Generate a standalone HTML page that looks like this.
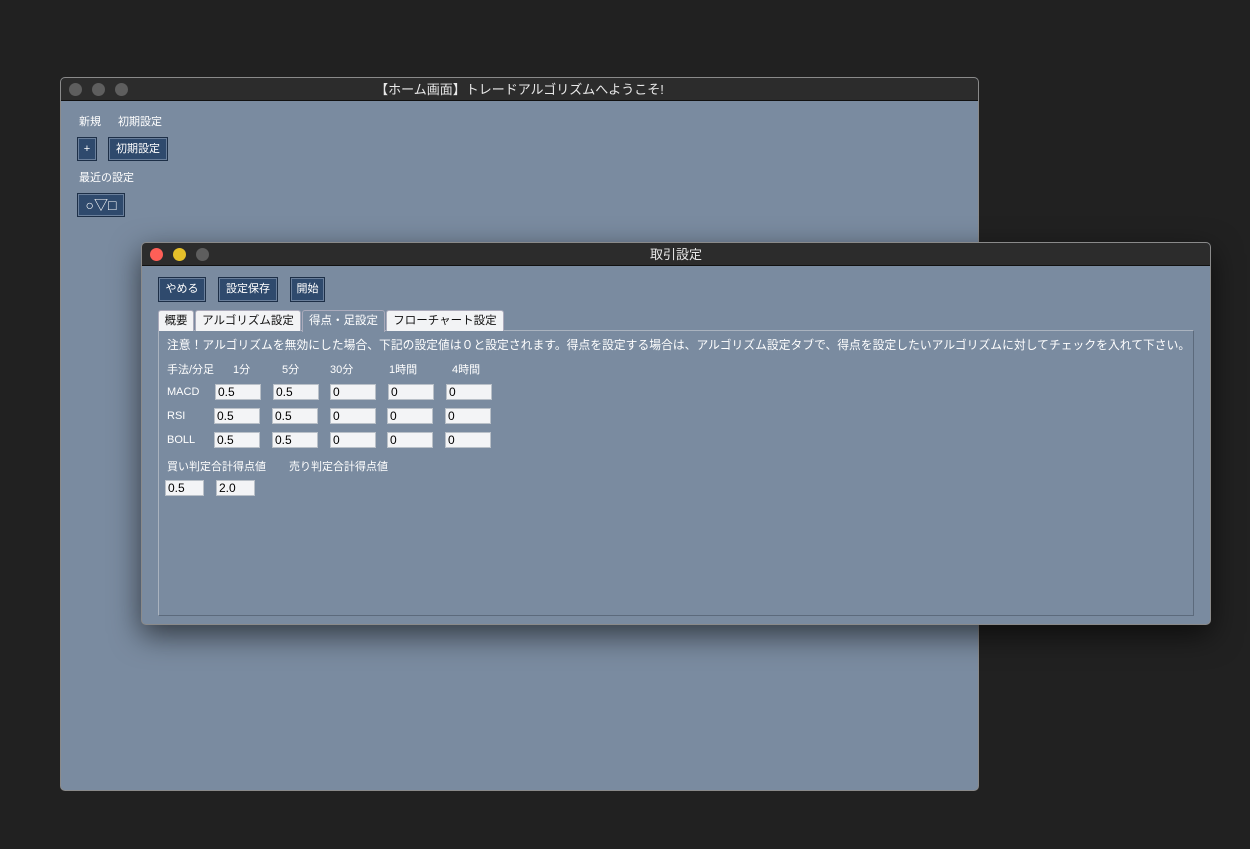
<!DOCTYPE html>
<html><head><meta charset="utf-8"><style>
*{box-sizing:border-box;margin:0;padding:0}
body{width:1250px;height:849px;background:#212121;position:relative;overflow:hidden;font-family:"Liberation Sans","Noto Sans CJK JP",sans-serif;font-size:11px;color:#fff}
.win{position:absolute;background:#7a8ba0;border:1px solid #8a8a8a;border-radius:5px;overflow:hidden}
.tb{height:23px;background:#2c2c2c;border-bottom:1px solid #111;text-align:center;line-height:23px;font-size:13px;color:#e8e8e8;position:relative}
.dot{position:absolute;top:5px;width:13px;height:13px;border-radius:50%;background:#5e5e5e}
.a{position:absolute;white-space:nowrap}
.btn{position:absolute;background:#2f4a6d;border:1px solid #1d2f47;box-shadow:inset 0 0 0 1px #6a7f9b;color:#fff;text-align:center;font-size:11px}
.in{position:absolute;width:46px;height:16px;background:#f3f4f6;border:1px solid #b9c0c8;color:#000;font-size:12px;line-height:14px;padding-left:2px}
.tab{position:absolute;top:310px;height:21px;background:#f2f3f5;border:1px solid #aab;border-bottom:none;border-radius:3px 3px 0 0;color:#111;font-size:11.5px;line-height:20px;text-align:center}
</style></head><body>

<div class="win" style="left:60px;top:77px;width:919px;height:714px">
<div class="tb"><span class="dot" style="left:8px"></span><span class="dot" style="left:31px"></span><span class="dot" style="left:54px"></span>【ホーム画面】トレードアルゴリズムへようこそ!</div>
<div class="a" style="left:18px;top:35px">新規</div>
<div class="a" style="left:57px;top:35px">初期設定</div>
<div class="btn" style="left:16px;top:59px;width:20px;height:24px;line-height:22px">+</div>
<div class="btn" style="left:47px;top:59px;width:60px;height:24px;line-height:22px">初期設定</div>
<div class="a" style="left:18px;top:91px">最近の設定</div>
<div class="btn" style="left:16px;top:115px;width:48px;height:24px;line-height:22px;font-size:14px">○▽□</div>
</div>

<div class="win" style="left:141px;top:242px;width:1070px;height:383px;box-shadow:0 10px 30px rgba(0,0,0,.6)">
<div class="tb"><span class="dot" style="left:8px;background:#fe5f57"></span><span class="dot" style="left:31px;background:#e6c02a"></span><span class="dot" style="left:54px"></span>取引設定</div>
</div>

<div class="btn" style="left:158px;top:277px;width:48px;height:25px;line-height:23px">やめる</div>
<div class="btn" style="left:218px;top:277px;width:60px;height:25px;line-height:23px">設定保存</div>
<div class="btn" style="left:290px;top:277px;width:35px;height:25px;line-height:23px">開始</div>

<div style="position:absolute;left:158px;top:330px;width:1036px;height:286px;border:1px solid #aab3bf;border-right-color:#5c6a7c;border-bottom-color:#5c6a7c"></div>
<div class="tab" style="left:158px;width:36px">概要</div>
<div class="tab" style="left:195px;width:106px">アルゴリズム設定</div>
<div class="tab" style="left:302px;width:83px;background:#7a8ba0;color:#fff;height:22px">得点・足設定</div>
<div class="tab" style="left:386px;width:118px">フローチャート設定</div>

<div class="a" style="left:167px;top:336px;font-size:11.75px;letter-spacing:0.05px">注意！アルゴリズムを無効にした場合、下記の設定値は０と設定されます。得点を設定する場合は、アルゴリズム設定タブで、得点を設定したいアルゴリズムに対してチェックを入れて下さい。</div>
<div class="a" style="left:167px;top:361px">手法/分足</div>
<div class="a" style="left:233px;top:361px">1分</div>
<div class="a" style="left:282px;top:361px">5分</div>
<div class="a" style="left:330px;top:361px">30分</div>
<div class="a" style="left:389px;top:361px">1時間</div>
<div class="a" style="left:452px;top:361px">4時間</div>
<div class="a" style="left:167px;top:386px">MACD</div>
<div class="a" style="left:167px;top:410px">RSI</div>
<div class="a" style="left:167px;top:434px">BOLL</div>

<div class="in" style="left:215px;top:384px">0.5</div><div class="in" style="left:273px;top:384px">0.5</div><div class="in" style="left:330px;top:384px">0</div><div class="in" style="left:388px;top:384px">0</div><div class="in" style="left:446px;top:384px">0</div>
<div class="in" style="left:214px;top:408px">0.5</div><div class="in" style="left:272px;top:408px">0.5</div><div class="in" style="left:330px;top:408px">0</div><div class="in" style="left:387px;top:408px">0</div><div class="in" style="left:445px;top:408px">0</div>
<div class="in" style="left:214px;top:432px">0.5</div><div class="in" style="left:272px;top:432px">0.5</div><div class="in" style="left:330px;top:432px">0</div><div class="in" style="left:387px;top:432px">0</div><div class="in" style="left:445px;top:432px">0</div>

<div class="a" style="left:167px;top:458px">買い判定合計得点値</div>
<div class="a" style="left:289px;top:458px">売り判定合計得点値</div>
<div class="in" style="left:165px;top:480px;width:39px">0.5</div>
<div class="in" style="left:216px;top:480px;width:39px">2.0</div>
</body></html>
